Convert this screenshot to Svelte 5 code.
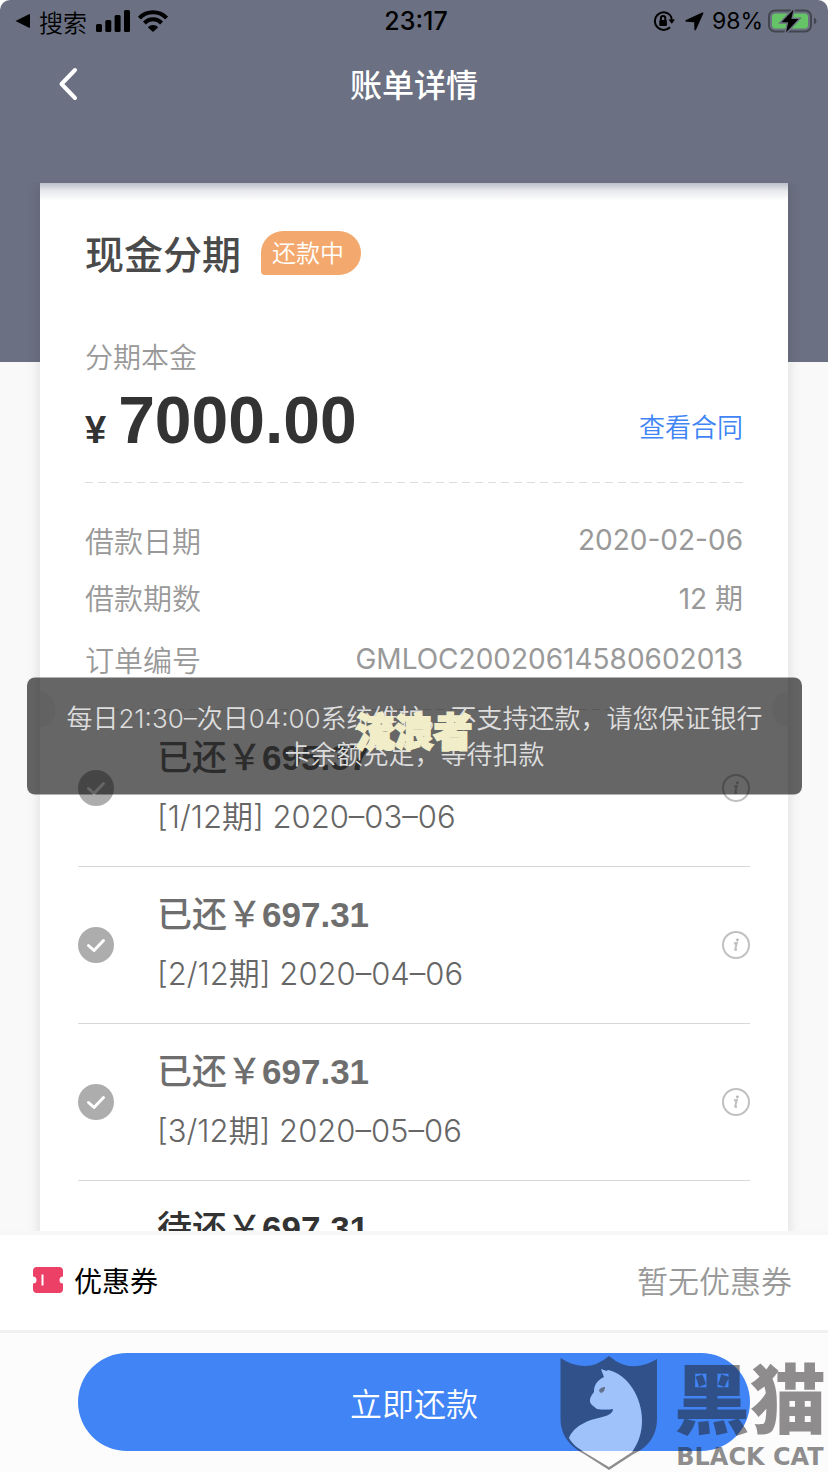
<script lang="ts">
  interface Installment {
    id: number;
    status: string;
    amount: string;
    date: string;
    paid: boolean;
  }

  const details = [
    { label: '借款日期', value: '2020-02-06' },
    { label: '借款期数', value: '12 期' },
    { label: '订单编号', value: 'GMLOC20020614580602013' }
  ];

  const installments: Installment[] = [
    { id: 1, status: '已还', amount: '695.37', date: '2020–03–06', paid: true },
    { id: 2, status: '已还', amount: '697.31', date: '2020–04–06', paid: true },
    { id: 3, status: '已还', amount: '697.31', date: '2020–05–06', paid: true },
    { id: 4, status: '待还', amount: '697.31', date: '2020–06–06', paid: false }
  ];
</script>

<div class="page">
  <header>
    <div class="status-bar">
      <div class="status-side">
        <svg class="back-app" viewBox="0 0 16 16" aria-hidden="true">
          <path d="M0.5 8 14 1.2Q15 0.8 15 2V14Q15 15.2 14 14.8Z" />
        </svg>
        <span class="back-label">搜索</span>
        <svg class="signal" viewBox="0 0 34 22" aria-hidden="true">
          <rect x="0" y="14" width="6" height="8" rx="1.5" />
          <rect x="9.3" y="10" width="6" height="12" rx="1.5" />
          <rect x="18.6" y="5" width="6" height="17" rx="1.5" />
          <rect x="28" y="0" width="6" height="22" rx="1.5" />
        </svg>
        <svg class="wifi" viewBox="0 0 30 22" aria-hidden="true">
          <path d="M1.4 8A19 19 0 0 1 28.6 8" />
          <path d="M6.4 13A12 12 0 0 1 23.6 13" />
          <path class="dot" d="M9.8 17.2A7.5 7.5 0 0 1 20.2 17.2L15 22Z" />
        </svg>
      </div>
      <span class="clock">23:17</span>
      <div class="status-side status-right">
        <svg class="lock" viewBox="0 0 22 20" aria-hidden="true">
          <path class="ring" d="M17.2 4.2A8.8 8.8 0 1 0 17 16.2M17.2 4.2A9 9 0 0 1 18.8 9" />
          <path d="M15.4 8.5H22L18.8 12.8Z" />
          <rect x="6.3" y="9" width="7.6" height="6" rx="1" />
          <path class="shackle" d="M7.9 9V7.2a2.2 2.2 0 0 1 4.4 0V9" />
        </svg>
        <svg class="arrow" viewBox="0 0 19 19" aria-hidden="true">
          <path d="M18.4 1.2 11 17.8Q9.8 19.4 9.4 17.6L9.2 10.2 1.2 9.8Q-0.4 9.2 1 8L17.2 0.6Q18.8 0 18.4 1.2Z" />
        </svg>
        <span class="battery-label">98%</span>
        <svg class="battery" viewBox="0 0 49 24" aria-hidden="true">
          <rect class="case" x="1" y="1.5" width="42" height="21" rx="6" />
          <rect class="level" x="4" y="4.5" width="36" height="15" rx="3.5" />
          <path class="case-tip" d="M46 8.5Q48.5 9.5 48.5 12T46 15.5Z" />
          <path class="bolt" d="M25.5 0.5 13.5 13.3H20.3L18 23.5 30.5 10H23.3Z" />
        </svg>
      </div>
    </div>
    <nav>
      <button class="back" type="button" aria-label="返回">
        <svg viewBox="0 0 20 34" aria-hidden="true"><path d="M17 3 3.5 17 17 31" /></svg>
      </button>
      <h1>账单详情</h1>
    </nav>
  </header>

  <main>
    <section class="card">
      <div class="summary">
        <div class="title-row">
          <h2>现金分期</h2>
          <span class="badge">还款中</span>
        </div>
        <p class="caption">分期本金</p>
        <div class="amount-row">
          <p class="amount"><span class="currency">¥</span>7000.00</p>
          <a href="#contract">查看合同</a>
        </div>
        <div class="dashes"></div>
        <dl>
          {#each details as detail}
            <div class="detail">
              <dt>{detail.label}</dt>
              <dd>{detail.value}</dd>
            </div>
          {/each}
        </dl>
      </div>

      <div class="tear">
        <div class="dashes"></div>
      </div>

      <ul>
        {#each installments as item (item.id)}
          <li class:paid={item.paid}>
            <svg class="check" viewBox="0 0 36 36" aria-hidden="true">
              <circle cx="18" cy="18" r="18" />
              <path d="M10.5 18.5 16 23.5 25.5 13.5" />
            </svg>
            <div class="item-text">
              <p class="item-amount"><span class="item-status">{item.status}￥</span>{item.amount}</p>
              <p class="item-date">[{item.id}/12期] {item.date}</p>
            </div>
            <button class="info" type="button" aria-label="详情">
              <svg viewBox="0 0 28 28" aria-hidden="true">
                <circle cx="14" cy="14" r="13" />
                <path class="stem" d="M12 12.5 14.8 11.8 13.2 18.4Q13 19.4 15 18.4" />
                <circle class="tittle" cx="15.4" cy="8.8" r="1.4" />
              </svg>
            </button>
          </li>
        {/each}
      </ul>
    </section>
  </main>

  <footer>
    <div class="coupon">
      <svg viewBox="0 0 30 26" aria-hidden="true">
        <path
          class="ticket"
          d="M4 0H26Q30 0 30 4V9.5A3.5 3.5 0 0 0 30 16.5V22Q30 26 26 26H4Q0 26 0 22V16.5A3.5 3.5 0 0 0 0 9.5V4Q0 0 4 0Z"
        />
        <path class="mark" d="M9.5 7.5V18.5" />
      </svg>
      <span class="coupon-name">优惠券</span>
      <span class="coupon-value">暂无优惠券</span>
    </div>
    <div class="action">
      <button class="pay" type="button">立即还款</button>
    </div>
  </footer>

  <div class="toast" role="status">每日21:30–次日04:00系统维护，不支持还款，请您保证银行<br />卡余额充足，等待扣款</div>
  <div class="user-mark">流浪者</div>

  <div class="brand">
    <svg viewBox="0 0 98 116" aria-hidden="true">
      <path
        class="shield"
        fill-rule="evenodd"
        d="M0.5 2Q27 19 49 0Q71 19 97 3V62C97 84 84 93 72 99L49 114 24 98C10 90 0.5 80 0.5 62ZM41 13 46.5 15 48 14C68 18 82 42 82 64C82 76 79 86 72 96L49 111 24 96C18 92 13 89 9 82C12 74 20 68 31 64C41 61 53 60 53 53Q45 54 37 53L32 49C29 46 29 42 34 36C34 30 36 25 44 21Z"
      />
      <path
        class="cat"
        d="M41 13 46.5 15 48 14C68 18 82 42 82 64C82 76 79 86 72 96L49 111 24 96C18 92 13 89 9 82C12 74 20 68 31 64C41 61 53 60 53 53Q45 54 37 53L32 49C29 46 29 42 34 36C34 30 36 25 44 21Z"
      />
      <path class="eye" d="M39 34Q41 31 45 31Q45 36 41 37Q39 36 39 34Z" />
    </svg>
    <div class="brand-text">
      <span class="brand-cn">黑猫</span>
      <span class="brand-en">BLACK CAT</span>
    </div>
  </div>
</div>

<style>
  :global(body) {
    background: #fff;
  }

  .page {
    position: relative;
    display: flex;
    flex-direction: column;
    height: 100vh;
    overflow: hidden;
    border-radius: 10px 10px 0 0;
    background: linear-gradient(#6b7082 362px, #f9f9f9 362px);
    color: #333;
    font-family: Inter, 'Noto Sans CJK SC', sans-serif;
  }

  h1,
  h2,
  p,
  dl,
  dd,
  ul {
    margin: 0;
    padding: 0;
  }

  button {
    padding: 0;
    border: 0;
    background: none;
    font-family: inherit;
    cursor: pointer;
  }

  svg {
    display: block;
    flex: none;
  }

  header {
    flex: none;
    height: 183px;
  }

  /* Status bar */
  .status-bar {
    display: flex;
    align-items: center;
    height: 42px;
    padding: 0 11px 0 15px;
    color: #000;
    font-size: 24px;
  }

  .status-side {
    display: flex;
    flex: 1;
    align-items: center;
  }

  .status-right {
    justify-content: flex-end;
  }

  .back-app {
    width: 16px;
    height: 16px;
  }

  .back-label {
    margin: 0 9px 0 8px;
    font-weight: 350;
  }

  .signal {
    width: 34px;
    height: 22px;
    margin-right: 8px;
  }

  .wifi {
    width: 30px;
    height: 22px;
    fill: none;
    stroke: #000;
    stroke-width: 4;
  }

  .wifi .dot {
    fill: #000;
    stroke: none;
  }

  .clock {
    font-size: 25px;
    font-weight: 500;
  }

  .lock {
    width: 22px;
    height: 20px;
    margin-right: 10px;
  }

  .lock .ring,
  .lock .shackle {
    fill: none;
    stroke: #000;
    stroke-width: 2;
  }

  .arrow {
    width: 19px;
    height: 19px;
    margin-right: 8px;
  }

  .battery-label {
    font-size: 23px;
  }

  .battery {
    width: 49px;
    height: 24px;
    margin-left: 5px;
  }

  .battery .case {
    fill: none;
    stroke: #43464f;
    stroke-width: 2;
  }

  .battery .case-tip {
    fill: #43464f;
  }

  .battery .level {
    fill: #65c466;
  }

  .battery .bolt {
    stroke: #6b7082;
    stroke-width: 3;
    paint-order: stroke;
  }

  /* Navigation */
  nav {
    display: grid;
    grid-template-columns: 1fr auto 1fr;
    align-items: center;
    height: 84px;
    padding: 0 58px;
    color: #fff;
  }

  .back {
    justify-self: start;
  }

  .back svg {
    width: 20px;
    height: 34px;
    fill: none;
    stroke: #fff;
    stroke-width: 4;
    stroke-linecap: round;
    stroke-linejoin: round;
  }

  h1 {
    padding-top: 4px;
    font-size: 32px;
    font-weight: 500;
    line-height: 44px;
  }

  /* Bill card */
  main {
    flex: 1;
    min-height: 0;
    padding: 0 40px;
    overflow: hidden;
  }

  .card {
    background: linear-gradient(#bcbfca, #e9eaee 8px, #fff 18px);
    box-shadow: 0 0 14px rgba(0, 0, 0, 0.12);
  }

  .summary {
    padding: 46px 45px 0;
  }

  .title-row {
    display: flex;
    align-items: center;
    height: 48px;
  }

  h2 {
    padding-top: 4px;
    color: #4a4a4a;
    font-size: 39px;
    font-weight: 500;
    line-height: 48px;
  }

  .badge {
    margin-left: 20px;
    padding: 2px 17px 0 11px;
    border-radius: 22px 22px 22px 4px;
    background: #f3a96d;
    color: #fff;
    font-size: 24px;
    font-weight: 350;
    line-height: 42px;
  }

  .caption {
    margin-top: 61px;
    color: #999;
    font-size: 28px;
    font-weight: 350;
    line-height: 40px;
  }

  .amount-row {
    display: flex;
    align-items: center;
    justify-content: space-between;
    height: 90px;
    padding-top: 2px;
  }

  .amount {
    font-family: 'Liberation Sans', Arial, sans-serif;
    font-size: 66px;
    font-weight: 700;
    line-height: 90px;
  }

  .currency {
    margin-right: 12px;
    font-size: 38px;
  }

  a {
    color: #4084f5;
    font-size: 26px;
    font-weight: 350;
    text-decoration: none;
  }

  .dashes {
    height: 1px;
    background: repeating-linear-gradient(90deg, #ddd 0 8px, transparent 8px 13px);
  }

  .summary .dashes {
    margin: 12px 0 28px;
  }

  .detail {
    display: flex;
    align-items: center;
    justify-content: space-between;
    height: 57px;
    color: #999;
    font-size: 29px;
    font-weight: 350;
  }

  .detail:last-child {
    height: 67px;
  }

  dd {
    font-size: 28px;
    font-weight: 400;
  }

  .tear {
    position: relative;
    padding: 17px 45px 0;
  }

  .tear::before,
  .tear::after {
    content: '';
    position: absolute;
    bottom: -17px;
    width: 15px;
    height: 35px;
    background: #f4f4f4;
  }

  .tear::before {
    left: 0;
    border-radius: 0 18px 18px 0;
  }

  .tear::after {
    right: 0;
    border-radius: 18px 0 0 18px;
  }

  /* Installments */
  ul {
    padding: 0 38px;
    list-style: none;
  }

  li {
    display: flex;
    align-items: center;
    box-sizing: border-box;
    height: 157px;
    border-bottom: 1px solid #d8d8d8;
  }

  .check {
    width: 36px;
    height: 36px;
    fill: #adadad;
  }

  .check path {
    fill: none;
    stroke: #fff;
    stroke-width: 3;
    stroke-linecap: round;
    stroke-linejoin: round;
  }

  .item-text {
    flex: 1;
    margin-left: 43px;
    padding-bottom: 2px;
  }

  .item-amount {
    font-family: 'Liberation Sans', 'Noto Sans CJK SC', sans-serif;
    font-size: 35px;
    font-weight: 700;
    line-height: 59px;
  }

  .item-status {
    font-weight: 500;
  }

  .paid .item-amount {
    color: #6e6e6e;
  }

  .item-date {
    color: #666;
    font-size: 31px;
    font-weight: 350;
    line-height: 59px;
  }

  .info svg {
    width: 28px;
    height: 28px;
    fill: none;
    stroke: #c0c0c0;
    stroke-width: 2;
  }

  .info .tittle {
    fill: #b5b5b5;
    stroke: none;
  }

  /* Footer */
  footer {
    flex: none;
    border-top: 4px solid #f7f7f7;
    background: #fcfcfc;
  }

  .coupon {
    display: flex;
    align-items: center;
    height: 95px;
    box-sizing: border-box;
    padding: 0 36px 6px 33px;
    background: #fff;
  }

  .coupon svg {
    width: 30px;
    height: 26px;
    margin-right: 11px;
  }

  .ticket {
    fill: #ec4067;
  }

  .mark {
    stroke: #fff;
    stroke-width: 2;
  }

  .coupon-name {
    flex: 1;
    color: #000;
    font-size: 28px;
  }

  .coupon-value {
    color: #999;
    font-size: 31px;
    font-weight: 350;
  }

  .action {
    padding: 20px 78px 21px;
    border-top: 3px solid #f1f1f1;
  }

  .pay {
    display: block;
    width: 100%;
    height: 98px;
    border-radius: 49px;
    background: #4084f5;
    color: #fff;
    font-size: 32px;
    font-weight: 350;
  }

  /* Overlays */
  .toast {
    position: absolute;
    top: 50%;
    right: 26px;
    left: 27px;
    box-sizing: border-box;
    padding: 23px 0 22px;
    border-radius: 8px;
    background: rgba(0, 0, 0, 0.6);
    color: #ddd;
    font-size: 26px;
    font-weight: 350;
    line-height: 36px;
    text-align: center;
    white-space: nowrap;
    transform: translateY(-50%);
  }

  .user-mark {
    position: absolute;
    top: 50%;
    left: 50%;
    padding-bottom: 8px;
    color: #f1edc8;
    font-size: 39px;
    font-weight: 900;
    line-height: 48px;
    white-space: nowrap;
    transform: translate(-50%, -50%);
    -webkit-text-stroke: 2px #f1edc8;
  }

  .brand {
    position: absolute;
    right: 2px;
    bottom: 0;
    display: flex;
    gap: 16px;
    pointer-events: none;
  }

  .brand svg {
    width: 98px;
    height: 116px;
  }

  .shield,
  .eye {
    fill: rgba(34, 30, 31, 0.5);
  }

  .cat {
    fill: rgba(255, 255, 255, 0.5);
  }

  .brand-text {
    display: flex;
    flex-direction: column;
    align-items: center;
    color: #221e1f;
    font-weight: 900;
    opacity: 0.5;
  }

  .brand-cn {
    font-size: 76px;
    line-height: 88px;
  }

  .brand-en {
    font-family: 'DejaVu Sans', sans-serif;
    font-size: 24px;
    line-height: 26px;
    white-space: nowrap;
  }
</style>
